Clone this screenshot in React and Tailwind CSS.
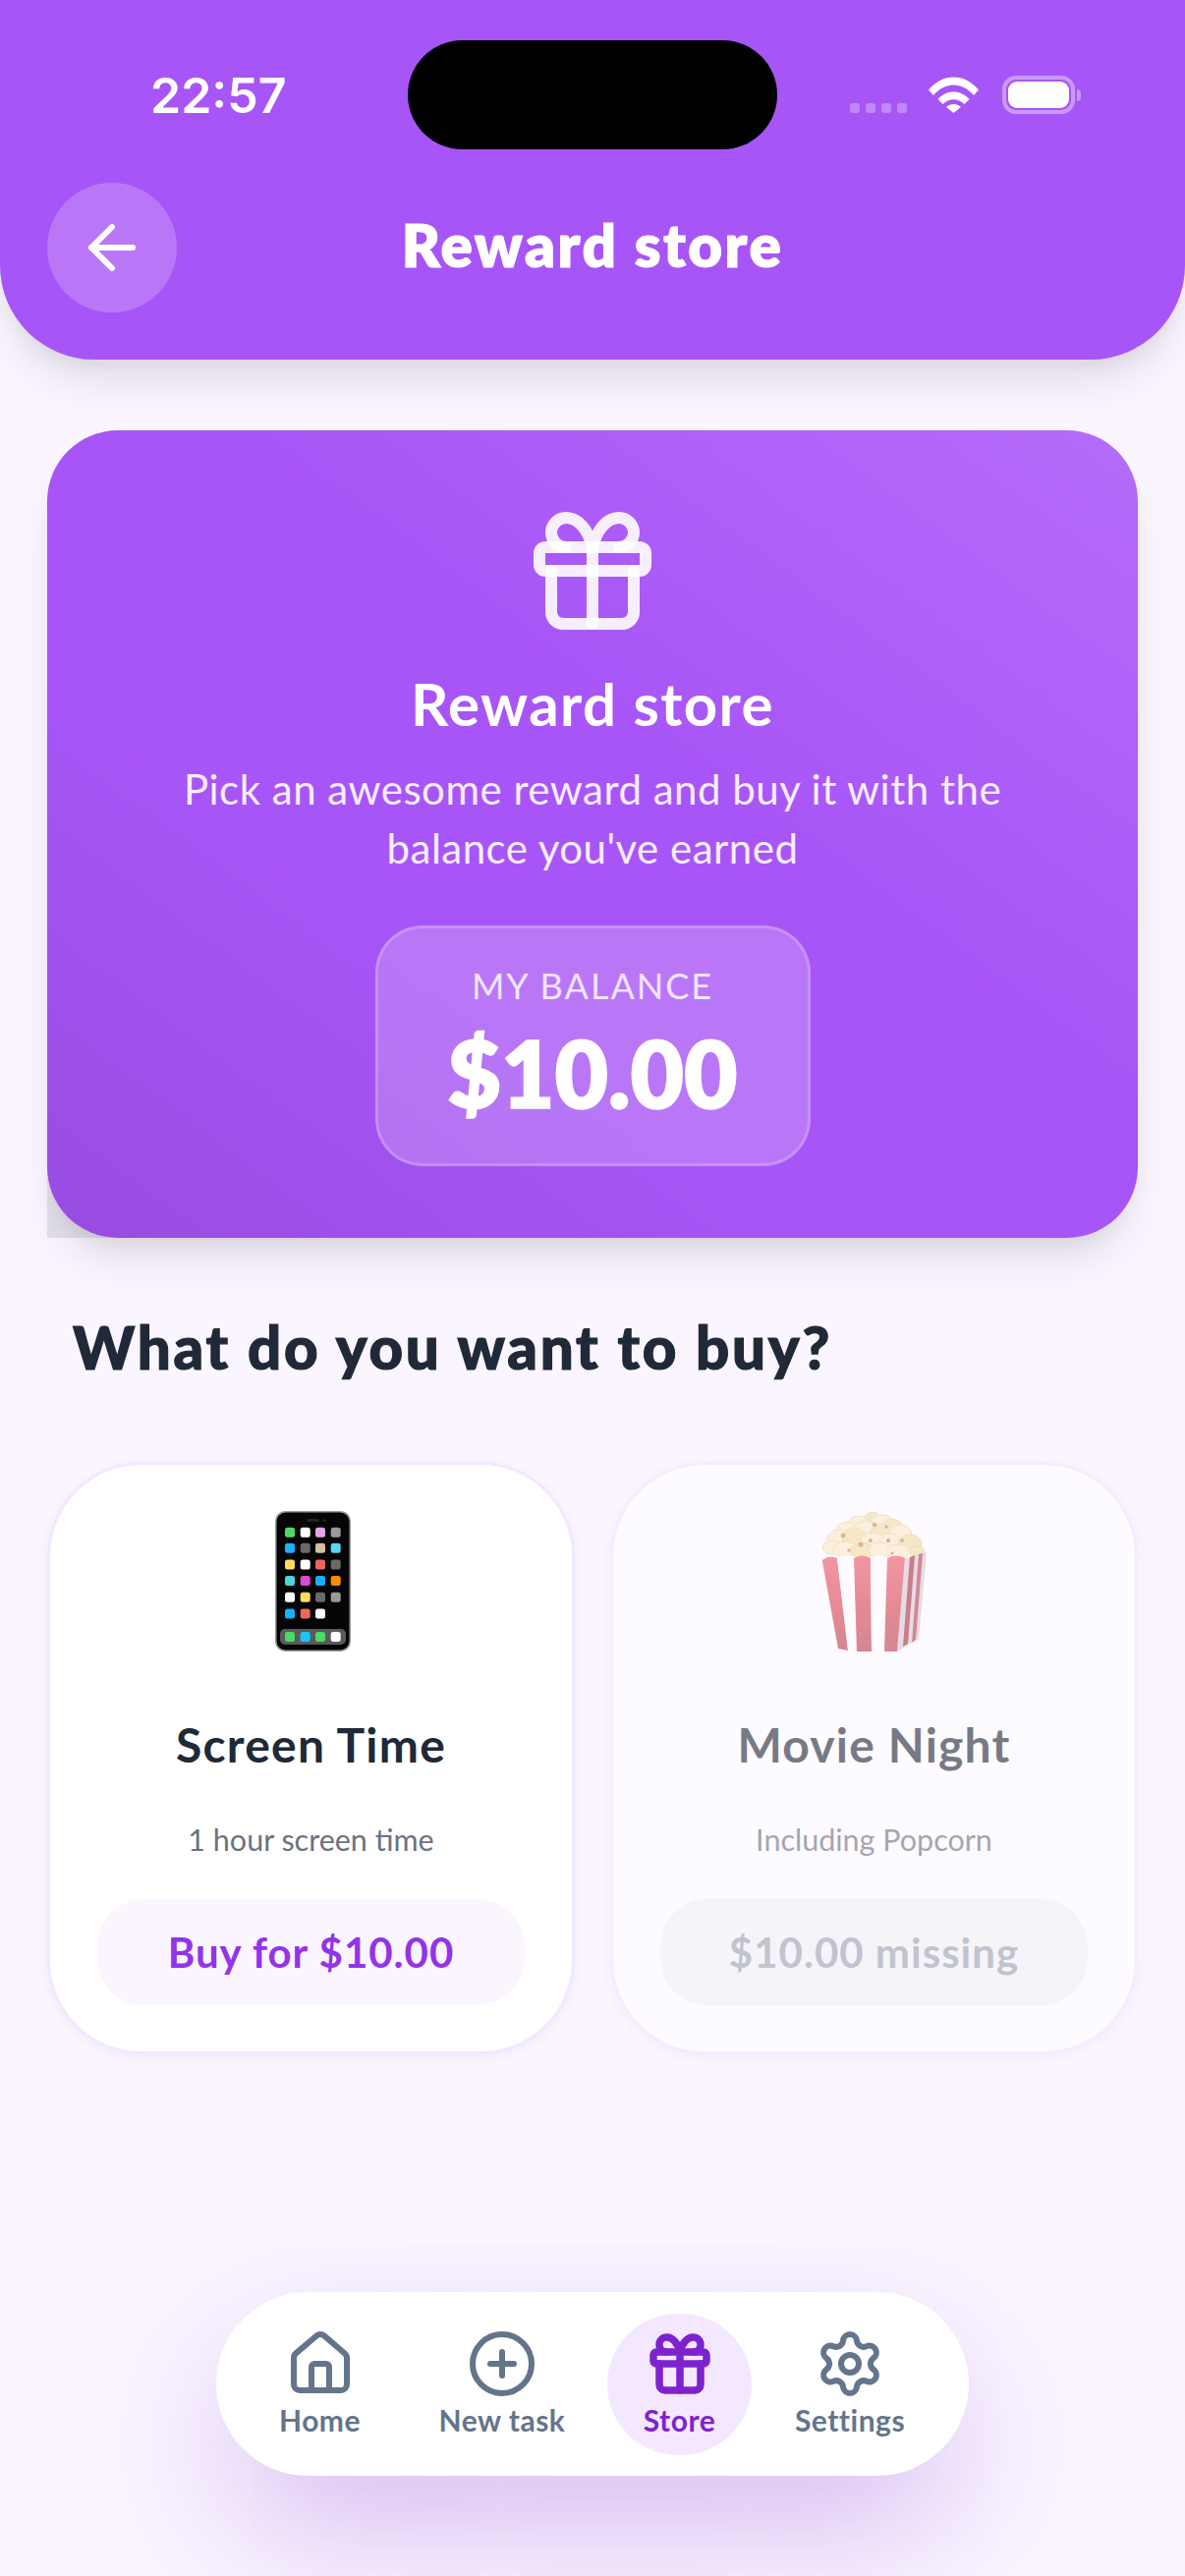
import React from 'react';
import { ArrowLeft, Gift, House, CirclePlus } from 'lucide-react';

const phoneRows = [
  ['#4cd964', '#ffffff', '#e2a6e6', '#999999'],
  ['#16b1fb', '#6a6a6a', '#d8bf9f', '#58d5ef'],
  ['#ffdc5c', '#ffffff', '#f2655c', '#6a6a6a'],
  ['#4fd4dc', '#d84bd0', '#16b1fb', '#ff8c00'],
  ['#ffffff', '#ffdc5c', '#6a6a6a', '#999999'],
  ['#16b1fb', '#f2655c', '#ffffff', null],
];
const phoneCols = [15, 30.7, 46, 61.7];
const phoneYs = [21.7, 37.7, 54.4, 71, 87.7, 104.4];
const dockColors = ['#4cd964', '#16c5fb', '#4cd964', '#ffffff'];

const PhoneEmoji = () => (
  <svg width="77" height="143" viewBox="0 0 77 143" className="ml-[3px]">
    <rect x="0" y="0" width="77" height="143" rx="10" fill="#9a9a9a" />
    <rect x="1.5" y="1.5" width="74" height="140" rx="9" fill="#050505" />
    <rect x="32" y="8" width="13" height="3" rx="1.5" fill="#222222" />
    <circle cx="50" cy="9.5" r="1.6" fill="#222222" />
    {phoneRows.map((row, r) =>
      row.map((color, c) =>
        color ? (
          <rect key={`${r}-${c}`} x={phoneCols[c] - 5} y={phoneYs[r] - 5} width="10" height="10" rx="2.5" fill={color} />
        ) : null
      )
    )}
    <rect x="5" y="120" width="67" height="16" rx="5" fill="#5a5a5a" />
    {dockColors.map((color, c) => (
      <rect key={c} x={phoneCols[c] - 5} y="123" width="10" height="10" rx="2.5" fill={color} />
    ))}
  </svg>
);

const kernels = [
  [52, 8, 8, 7], [38, 13, 10, 8], [62, 12, 11, 8], [72, 16, 10, 8], [26, 20, 11, 9], [45, 19, 12, 9],
  [62, 22, 12, 9], [80, 24, 12, 10], [17, 28, 11, 9], [33, 27, 12, 10], [52, 31, 12, 9], [70, 32, 11, 9],
  [90, 33, 12, 9], [11, 37, 10, 7], [24, 39, 12, 8], [42, 40, 12, 8], [60, 40, 12, 8], [78, 41, 12, 7], [97, 41, 8, 5],
];
const kernelSpots = [
  [22, 25, 2.4, '#c98a4a'], [40, 34, 2.6, '#c98a4a'], [54, 14, 2.2, '#c98a4a'], [50, 30, 2, '#c98a4a'],
  [68, 30, 2, '#d0704a'], [82, 30, 2, '#c98a4a'], [28, 40, 1.8, '#c98a4a'], [66, 16, 1.8, '#c98a4a'], [72, 43, 1.4, '#d0704a'],
];

const PopcornEmoji = () => (
  <svg width="107" height="143" viewBox="0 0 107 143">
    <defs>
      <linearGradient id="popRed" x1="0" y1="0" x2="0" y2="1">
        <stop offset="0" stopColor="#ee5a66" />
        <stop offset="0.55" stopColor="#d9434c" />
        <stop offset="1" stopColor="#b93f4c" />
      </linearGradient>
    </defs>
    {kernels.map(([x, y, rx, ry], i) => (
      <ellipse key={i} cx={x} cy={y} rx={rx} ry={ry} fill={i % 3 === 0 ? '#f5dfa4' : '#fbeec8'} stroke="#e6cd8e" strokeWidth="0.8" />
    ))}
    {kernelSpots.map(([x, y, r, color], i) => (
      <circle key={i} cx={x} cy={y} r={r} fill={color} />
    ))}
    <path d="M85 48 L107 42 L99 130 L77 143 Z" fill="#d9cdd2" />
    <path d="M90 47 L95 45 L88 135 L83 138 Z" fill="#a8303f" />
    <path d="M99 44 L103 43 L96 131 L92 134 Z" fill="#b8404f" />
    <path d="M0.7 50 Q8 44 16 48 L27 142 L17 140 Z" fill="url(#popRed)" />
    <path d="M16 48 Q24 42 33 48 L36 143 L27 142 Z" fill="#ffffff" />
    <path d="M33 48 Q41 43 50 48 L51 143 L36 143 Z" fill="url(#popRed)" />
    <path d="M50 48 Q58 42 67 48 L64 143 L51 143 Z" fill="#ffffff" />
    <path d="M67 48 Q76 43 85 48 L77 143 L64 143 Z" fill="url(#popRed)" />
  </svg>
);

const Wifi = () => (
  <svg width="51" height="37" viewBox="0 0 51 37" fill="#ffffff">
    <path d="M0 13.5 C14 -4 37 -4 51 13.5 L46 19 C34 5 17 5 5 19 Z" />
    <path d="M9.5 23 C18 13 33 13 41.5 23 L36.5 28 C30 21.5 21 21.5 14.5 28 Z" />
    <path d="M18 31 C22 27 29 27 33 31 L25.5 37 Z" />
  </svg>
);

const SettingsIcon = ({ size, strokeWidth }) => (
  <svg width={size} height={size} viewBox="0 0 24 24" fill="none" stroke="currentColor" strokeWidth={strokeWidth} strokeLinecap="round" strokeLinejoin="round">
    <path d="M9.671 4.136a2.34 2.34 0 0 1 4.659 0 2.34 2.34 0 0 0 3.319 1.915 2.34 2.34 0 0 1 2.33 4.033 2.34 2.34 0 0 0 0 3.831 2.34 2.34 0 0 1-2.33 4.033 2.34 2.34 0 0 0-3.319 1.915 2.34 2.34 0 0 1-4.659 0 2.34 2.34 0 0 0-3.32-1.915 2.34 2.34 0 0 1-2.33-4.033 2.34 2.34 0 0 0 0-3.831A2.34 2.34 0 0 1 6.35 6.051a2.34 2.34 0 0 0 3.32-1.915" />
    <circle cx="12" cy="12" r="3" />
  </svg>
);

const RewardCard = ({ emoji, title, subtitle, action, dimmed }) => (
  <div className={`flex h-[603px] flex-col items-center rounded-[96px] border-[3px] border-[#f3e8ff] bg-white px-[48px] pt-[47px] shadow-[0_3px_9px_rgba(168,85,247,0.08)] ${dimmed ? 'opacity-60' : ''}`}>
    <div className="flex h-[143px] items-center justify-center">{emoji}</div>
    <h3 className="mt-[63px] text-[48px] font-bold leading-[64px] tracking-[1.2px] text-[#1f2937]">{title}</h3>
    <p className="mt-[42px] text-[30.5px] leading-[44px] text-[#6b7280]">{subtitle}</p>
    <div className={`mt-[39px] flex h-[108px] w-full items-center justify-center rounded-[48px] text-[42px] font-bold tracking-[1px] ${dimmed ? 'bg-[#f3f4f6] text-[#9ca3af]' : 'bg-[#faf5ff] text-[#9333ea]'}`}>
      {action}
    </div>
  </div>
);

const NavItem = ({ icon: Icon, label, width, active }) => (
  <div
    className={`flex h-[144px] flex-col items-center justify-center rounded-full ${width} ${active ? 'bg-[#f3e8ff] text-[#7e22ce]' : 'text-[#64748b]'}`}
  >
    <Icon size={72} strokeWidth={active ? 2.5 : 2} />
    <span className="mt-[1px] text-[30px] font-bold leading-[40px] tracking-[0.5px]">{label}</span>
  </div>
);

export default function App() {
  return (
    <div className="flex h-[2622px] w-[1206px] flex-col overflow-hidden bg-[#faf5ff] font-[Lato,sans-serif]">
      <header className="rounded-b-[96px] bg-[#a855f7] px-[48px] pb-[48px] pt-[41px] shadow-[0_30px_45px_-9px_rgba(0,0,0,0.1),0_12px_18px_-6px_rgba(0,0,0,0.05)]">
        <div className="flex h-[111px] items-center">
          <div className="w-[367px] pl-[105px] font-[Inter,sans-serif] text-[50px] font-semibold leading-none text-white">22:57</div>
          <div className="h-[111px] w-[376px] rounded-full bg-black" />
          <div className="flex flex-1 items-center pl-[74px]">
            <div className="mt-[27px] flex gap-[6px]">
              <span className="h-[10px] w-[10px] rounded-[3px] bg-white/30" />
              <span className="h-[10px] w-[10px] rounded-[3px] bg-white/30" />
              <span className="h-[10px] w-[10px] rounded-[3px] bg-white/30" />
              <span className="h-[10px] w-[10px] rounded-[3px] bg-white/30" />
            </div>
            <div className="ml-[22px] flex"><Wifi /></div>
            <div className="ml-[24px] flex h-[39px] w-[74px] items-center justify-center rounded-[14px] border-[4px] border-white/40">
              <div className="h-[27px] w-[62px] rounded-[9px] bg-white" />
            </div>
            <div className="ml-[2px] h-[12px] w-[4px] rounded-r-full bg-white/40" />
          </div>
        </div>
        <div className="mt-[34px] grid grid-cols-[132px_1fr_132px] items-center">
          <div className="flex h-[132px] w-[132px] items-center justify-center rounded-full bg-white/20 text-white">
            <ArrowLeft size={72} strokeWidth={2} />
          </div>
          <h1 className="pb-[6px] text-center text-[60px] font-extrabold leading-none tracking-[2.5px] text-white [-webkit-text-stroke:1px_white]">Reward store</h1>
        </div>
      </header>

      <main className="px-[48px] pt-[72px]">
        <section className="relative">
          <div className="absolute bottom-0 left-0 h-[72px] w-[72px] bg-[#8d8a99]/20" />
          <div className="relative flex h-[822px] flex-col items-center rounded-[72px] bg-[linear-gradient(to_top_right,#984ce1_0%,#a855f7_35%,#a855f7_58%,#b56cf9_100%)] pt-[71px] text-white shadow-[0_30px_45px_-9px_rgba(0,0,0,0.1),0_12px_18px_-6px_rgba(0,0,0,0.05)]">
            <Gift size={144} strokeWidth={2} className="text-white/90" />
            <h2 className="mt-[23px] text-[60px] font-bold leading-[80px] tracking-[1.4px]">Reward store</h2>
            <p className="mt-[17px] w-[900px] text-center text-[42px] leading-[60px] tracking-[0.5px] text-white/90">
              Pick an awesome reward and buy it with the balance you've earned
            </p>
            <div className="mt-[49px] flex h-[245px] w-[443px] flex-col items-center rounded-[48px] border-[3px] border-white/20 bg-white/20 pt-[34px]">
              <span className="text-[36px] uppercase leading-[48px] tracking-[2px] text-white/80">My balance</span>
              <span className="mt-[10px] text-[94px] font-extrabold leading-[110px] [-webkit-text-stroke:1.5px_white]">$10.00</span>
            </div>
          </div>
        </section>

        <h2 className="mt-[75px] pl-[26px] text-[60px] font-black leading-[72px] tracking-[2.75px] text-[#1f2937] [-webkit-text-stroke:1.2px_#1f2937]">What do you want to buy?</h2>

        <div className="mt-[81px] grid grid-cols-2 gap-[36px]">
          <RewardCard emoji={<PhoneEmoji />} title="Screen Time" subtitle="1 hour screen time" action="Buy for $10.00" />
          <RewardCard emoji={<PopcornEmoji />} title="Movie Night" subtitle="Including Popcorn" action="$10.00 missing" dimmed />
        </div>
      </main>

      <nav className="mx-auto mb-[102px] mt-auto flex h-[187px] w-[766px] items-center gap-[7px] rounded-full bg-white pl-[30px] shadow-[0_60px_150px_-15px_rgba(126,34,206,0.3)]">
        <NavItem icon={House} label="Home" width="mr-[3px] w-[151px]" />
        <NavItem icon={CirclePlus} label="New task" width="w-[200px]" />
        <NavItem icon={Gift} label="Store" width="w-[147px]" active />
        <NavItem icon={SettingsIcon} label="Settings" width="w-[186px]" />
      </nav>
    </div>
  );
}
